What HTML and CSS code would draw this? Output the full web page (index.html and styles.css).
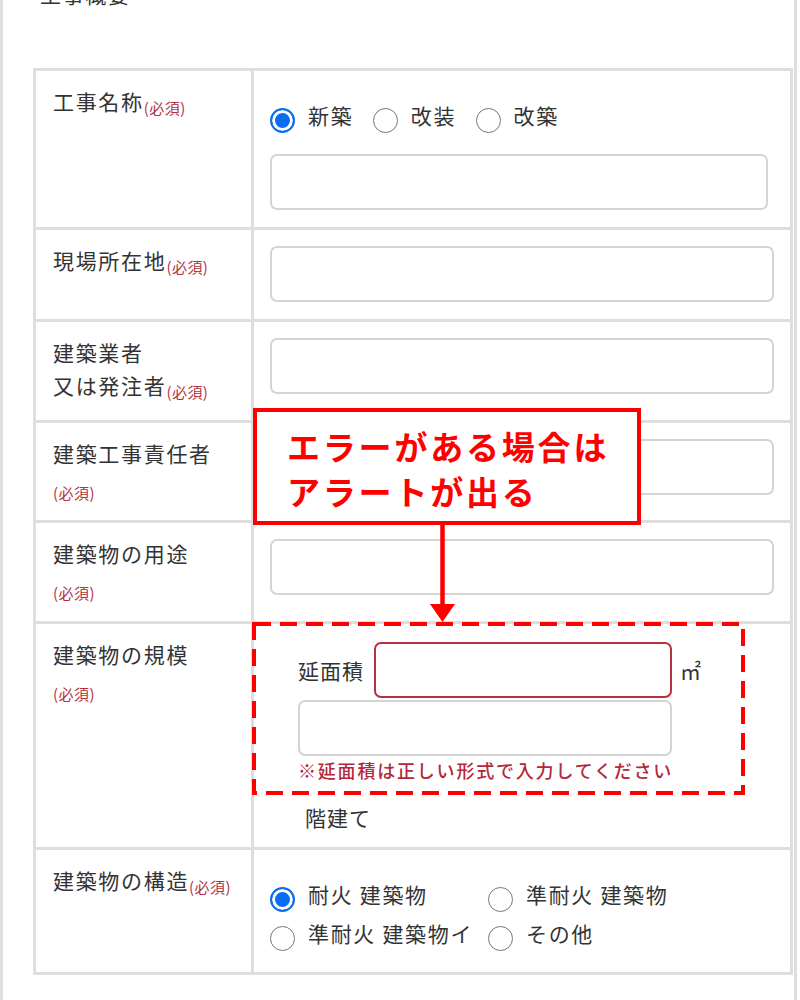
FILE: index.html
```html
<!DOCTYPE html>
<html lang="ja">
<head>
    <meta charset="UTF-8">
    <meta name="viewport" content="width=device-width, initial-scale=1.0">
    <link rel="stylesheet" href="styles.css">
</head>
<body>

<div class="page">
    <h2 class="section-title">工事概要</h2>

    <div class="form">
        <div class="label">工事名称<span class="req">(必須)</span></div>
        <div class="field">
            <div class="radios">
                <label class="opt"><input type="radio" name="kind" checked>新築</label>
                <label class="opt"><input type="radio" name="kind">改装</label>
                <label class="opt"><input type="radio" name="kind">改築</label>
            </div>
            <input class="text short" type="text">
        </div>

        <div class="label">現場所在地<span class="req">(必須)</span></div>
        <div class="field"><input class="text" type="text"></div>

        <div class="label">建築業者<br>又は発注者<span class="req">(必須)</span></div>
        <div class="field"><input class="text" type="text"></div>

        <div class="label">建築工事責任者<span class="req block">(必須)</span></div>
        <div class="field"><input class="text" type="text"></div>

        <div class="label">建築物の用途<span class="req block">(必須)</span></div>
        <div class="field"><input class="text" type="text"></div>

        <div class="label">建築物の規模<span class="req block">(必須)</span></div>
        <div class="field">
            <div class="area">
                <div class="area-line">
                    <span class="area-name">延面積</span>
                    <input class="text error" type="text">
                    <span class="unit">㎡</span>
                </div>
                <input class="text wide" type="text">
                <p class="error-msg">※延面積は正しい形式で入力してください</p>
            </div>
            <div class="floors">階建て</div>
        </div>

        <div class="label">建築物の構造<span class="req">(必須)</span></div>
        <div class="field">
            <div class="radios two-col">
                <label class="opt"><input type="radio" name="structure" checked>耐火 建築物</label>
                <label class="opt"><input type="radio" name="structure">準耐火 建築物</label>
                <label class="opt"><input type="radio" name="structure">準耐火 建築物イ</label>
                <label class="opt"><input type="radio" name="structure">その他</label>
            </div>
        </div>
    </div>

    <!-- annotation -->
    <div class="callout">エラーがある場合は<br>アラートが出る</div>
    <svg class="arrow" width="25" height="98" viewBox="0 0 25 98">
        <line x1="12.5" y1="0" x2="12.5" y2="84" stroke="#ff0000" stroke-width="4.5"/>
        <polygon points="0,80 25,80 12.5,98" fill="#ff0000"/>
    </svg>
    <svg class="dashed" width="493" height="173" viewBox="0 0 493 173">
        <rect x="2" y="2" width="489" height="169" fill="none" stroke="#ff0000" stroke-width="4" stroke-dasharray="17 9"/>
    </svg>
</div>

</body>
</html>
```

FILE: styles.css
```css
body {
    margin: 0;
    background: #fff;
    font-family: "Noto Sans CJK JP", "Noto Sans", sans-serif;
    color: #333;
}
.page {
    position: relative;
    box-sizing: border-box;
    width: 797px;
    min-height: 1000px;
    padding: 0 1px 0 30px;
    border-left: 3px solid #dedede;
    border-right: 3px solid #dedede;
    overflow: hidden;
}
.section-title {
    margin: -18px 0 62px 7px;
    font-size: 21px;
    line-height: 24px;
    font-weight: normal;
    letter-spacing: 0.08em;
}
.form {
    display: grid;
    grid-template-columns: 215px 1fr;
    grid-template-rows: 156px 89px 98px 97px 98px 223px 122px;
    gap: 3px;
    background: #dedede;
    border: 3px solid #dedede;
}
.label, .field {
    background: #fff;
}
.label {
    padding: 14px 6px 0 17px;
    font-size: 21px;
    line-height: 33px;
    letter-spacing: 0.08em;
}
.req {
    font-size: 15px;
    color: #b3343f;
    letter-spacing: 0.03em;
    vertical-align: -4px;
    line-height: 1;
}
.req.block {
    display: block;
    line-height: 33px;
    padding-top: 6px;
    vertical-align: baseline;
}
.field {
    padding: 16px 16px 0;
}
.text {
    display: block;
    box-sizing: border-box;
    width: 100%;
    height: 56px;
    margin: 0;
    border: 2px solid #d4d4d4;
    border-radius: 7px;
    background: #fff;
    font: inherit;
}
.text.short {
    width: calc(100% - 6px);
}
.radios {
    margin: 9px 0 20px;
    font-size: 21px;
    line-height: 38px;
    letter-spacing: 0.08em;
}
.radios.two-col {
    display: grid;
    grid-template-columns: 218px auto;
    line-height: 39px;
}
.opt {
    display: inline-block;
    margin-right: 13px;
    white-space: nowrap;
}
.two-col .opt {
    margin-right: 0;
}
.opt input {
    appearance: none;
    -webkit-appearance: none;
    box-sizing: border-box;
    width: 25px;
    height: 25px;
    margin: 0 13px 0 0;
    border: 1.5px solid #777;
    border-radius: 50%;
    background: #fff;
    vertical-align: -9px;
}
.opt input:checked {
    border: 2px solid #0b6cf0;
    background: #0b6cf0;
    box-shadow: inset 0 0 0 3px #fff;
}
.area {
    padding: 2px 0 0 28px;
}
.area-line {
    display: flex;
    align-items: center;
}
.area-name {
    width: 76px;
    font-size: 21px;
    letter-spacing: 0.05em;
}
.text.error {
    width: 298px;
    border-color: #b8313f;
}
.unit {
    margin-left: 8px;
    font-size: 21px;
}
.text.wide {
    width: 374px;
    margin-top: 2px;
}
.error-msg {
    margin: 2px 0 0;
    font-size: 18px;
    line-height: 24px;
    font-weight: 500;
    color: #b3283a;
    letter-spacing: 0.1em;
}
.floors {
    margin-top: 19px;
    padding-left: 35px;
    font-size: 21px;
    line-height: 33px;
    letter-spacing: 0.05em;
}
.callout {
    position: absolute;
    left: 250px;
    top: 408px;
    box-sizing: border-box;
    width: 388px;
    height: 117px;
    padding: 12px 0 0 30px;
    border: 4px solid #ff0000;
    background: #fff;
    color: #ff0000;
    font-size: 33px;
    font-weight: bold;
    line-height: 45px;
    letter-spacing: 2.8px;
}
.arrow {
    position: absolute;
    left: 427px;
    top: 524px;
}
.dashed {
    position: absolute;
    left: 249px;
    top: 622px;
}
```
